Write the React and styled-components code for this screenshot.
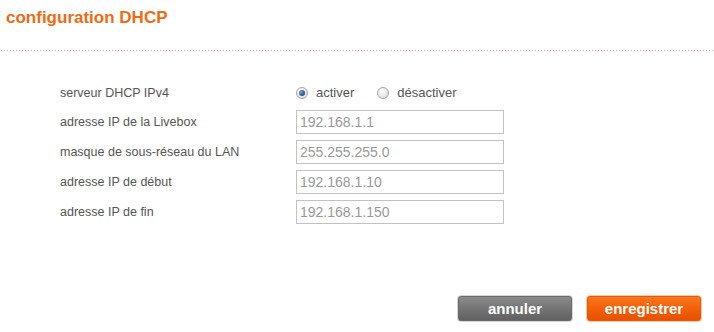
import React from "react";
import styled, { createGlobalStyle } from "styled-components";

const Global = createGlobalStyle`
  html, body { margin: 0; padding: 0; background: #fff; }
  body { font-family: "Liberation Sans", Arial, sans-serif; width: 714px; height: 332px; overflow: hidden; }
`;

const Page = styled.div`
  display: flex;
  flex-direction: column;
  width: 714px;
  height: 332px;
`;

const Title = styled.h1`
  margin: 0;
  padding: 8px 0 0 6px;
  font-size: 17px;
  line-height: 20px;
  font-weight: bold;
  color: #f06a12;
`;

const Dotted = styled.div`
  margin-top: 22px;
  height: 1px;
  background-image: repeating-linear-gradient(to right, #cfb3a0 0 1px, transparent 1px 3px);
  background-position: 1px 0;
`;

const Form = styled.div`
  display: flex;
  flex-direction: column;
  gap: 6px;
  padding: 30px 0 0 60px;
`;

const Row = styled.div`
  display: flex;
  align-items: center;
  height: ${(p) => p.$h || 24}px;
`;

const Label = styled.div`
  width: 236px;
  font-size: 12.5px;
  color: #555;
`;

const Input = styled.div`
  box-sizing: border-box;
  width: 208px;
  height: 24px;
  border: 1px solid #c2c2c2;
  padding: 0 3px;
  font-size: 14px;
  line-height: 22px;
  color: #999;
`;

const RadioGroup = styled.div`
  display: flex;
  align-items: center;
`;

const RadioOption = styled.label`
  display: flex;
  align-items: center;
  gap: 8px;
  font-size: 13px;
  color: #555;
  margin-right: ${(p) => p.$mr || 0}px;
`;

const RadioCircle = styled.span`
  box-sizing: border-box;
  width: 12px;
  height: 12px;
  border-radius: 50%;
  border: 1px solid #a8a8a8;
  background: radial-gradient(circle at 40% 35%, #ffffff 0%, #e6e6e6 60%, #cfcfcf 100%);
  display: flex;
  align-items: center;
  justify-content: center;
  &::after {
    content: "";
    display: ${(p) => (p.$on ? "block" : "none")};
    width: 6px;
    height: 6px;
    border-radius: 50%;
    background: radial-gradient(circle at 35% 35%, #7fa7d8 0%, #2d5a99 55%, #1b3b6b 100%);
  }
`;

const Footer = styled.div`
  display: flex;
  justify-content: flex-end;
  gap: 13px;
  padding: 0 12px 0 0;
  margin-top: 71px;
`;

const Button = styled.button`
  box-sizing: border-box;
  width: 116px;
  height: 27px;
  border-radius: 4px;
  border: 1px solid ${(p) => (p.$primary ? "#f6c9a8" : "#d6d6d6")};
  background: ${(p) =>
    p.$primary
      ? "linear-gradient(to bottom, #fb7a22 0%, #f26008 50%, #e84f00 100%)"
      : "linear-gradient(to bottom, #8d8d8d 0%, #747474 50%, #5f5f5f 100%)"};
  box-shadow: inset 0 0 0 1px ${(p) => (p.$primary ? "#e25a06" : "#6a6a6a")};
  color: #fff;
  font-family: "Liberation Sans", Arial, sans-serif;
  font-weight: bold;
  font-size: 15px;
  padding: 0;
  cursor: pointer;
`;

export default function App() {
  const rows = [
    ["adresse IP de la Livebox", "192.168.1.1"],
    ["masque de sous-réseau du LAN", "255.255.255.0"],
    ["adresse IP de début", "192.168.1.10"],
    ["adresse IP de fin", "192.168.1.150"],
  ];
  return (
    <>
      <Global />
      <Page>
        <Title>configuration DHCP</Title>
        <Dotted />
        <Form>
          <Row $h={23}>
            <Label>serveur DHCP IPv4</Label>
            <RadioGroup>
              <RadioOption $mr={23}>
                <RadioCircle $on />
                activer
              </RadioOption>
              <RadioOption>
                <RadioCircle />
                désactiver
              </RadioOption>
            </RadioGroup>
          </Row>
          {rows.map(([l, v]) => (
            <Row key={l}>
              <Label>{l}</Label>
              <Input>{v}</Input>
            </Row>
          ))}
        </Form>
        <Footer>
          <Button>annuler</Button>
          <Button $primary>enregistrer</Button>
        </Footer>
      </Page>
    </>
  );
}
